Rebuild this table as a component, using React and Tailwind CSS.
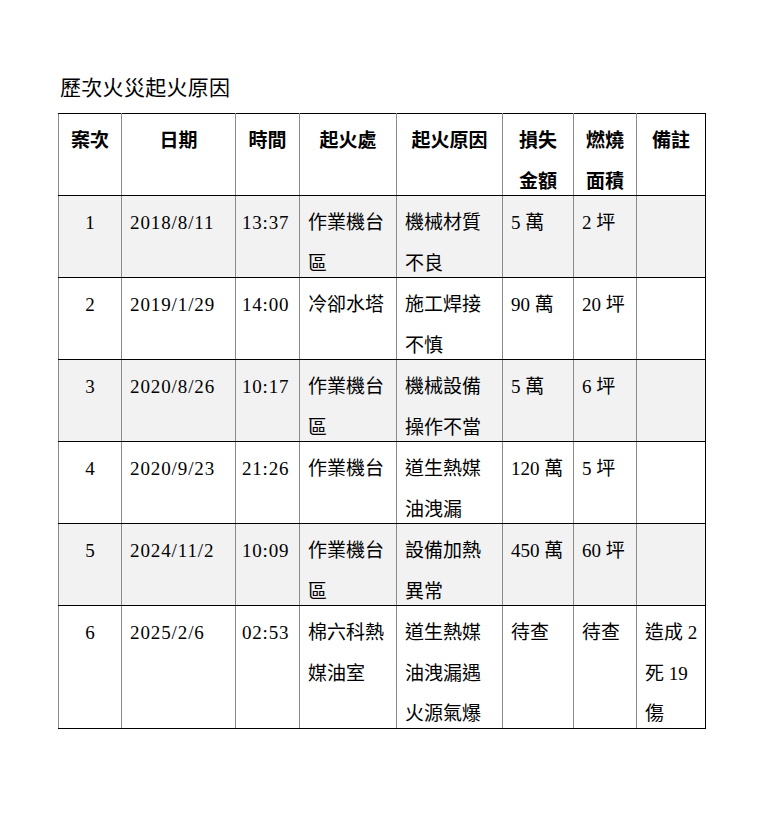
import React from "react";

const rows = [
    { no: "1", date: "2018/8/11", time: "13:37", place: "作業機台區", cause: "機械材質不良", loss: "5 萬", area: "2 坪", note: "", shade: true },
    { no: "2", date: "2019/1/29", time: "14:00", place: "冷卻水塔", cause: "施工焊接不慎", loss: "90 萬", area: "20 坪", note: "", shade: false },
    { no: "3", date: "2020/8/26", time: "10:17", place: "作業機台區", cause: "機械設備操作不當", loss: "5 萬", area: "6 坪", note: "", shade: true },
    { no: "4", date: "2020/9/23", time: "21:26", place: "作業機台", cause: "道生熱媒油洩漏", loss: "120 萬", area: "5 坪", note: "", shade: false },
    { no: "5", date: "2024/11/2", time: "10:09", place: "作業機台區", cause: "設備加熱異常", loss: "450 萬", area: "60 坪", note: "", shade: true },
    { no: "6", date: "2025/2/6", time: "02:53", place: "棉六科熱媒油室", cause: "道生熱媒油洩漏遇火源氣爆", loss: "待查", area: "待查", note: "造成 2 死 19 傷", shade: false },
];

const cell = "align-top p-0 border-y border-y-black border-x border-x-[#8a8a8a]";
const inner = "pt-[7px] -mb-[7px] leading-[40.5px] min-h-[81px]";

const App = () => {
    return (
        <div className="w-[758px] min-h-[817px] bg-white text-black font-['Liberation_Serif','Noto_Sans_CJK_TC',serif] pl-[58px] pt-[76px]">
            <h1 className="text-[21px] leading-[24px] pl-[2px] tracking-[0.3px]">歷次火災起火原因</h1>
            <table className="mt-[13px] w-[647px] table-fixed border-collapse text-[19px]">
                <colgroup>
                    <col className="w-[63px]" />
                    <col className="w-[114px]" />
                    <col className="w-[64px]" />
                    <col className="w-[97px]" />
                    <col className="w-[106px]" />
                    <col className="w-[71px]" />
                    <col className="w-[63px]" />
                    <col className="w-[69px]" />
                </colgroup>
                <thead>
                    <tr className="font-bold text-center">
                        <th className={cell}><div className={inner}>案次</div></th>
                        <th className={cell}><div className={inner}>日期</div></th>
                        <th className={cell}><div className={inner}>時間</div></th>
                        <th className={cell}><div className={inner}>起火處</div></th>
                        <th className={cell}><div className={inner}>起火原因</div></th>
                        <th className={cell}><div className={inner}>損失<br />金額</div></th>
                        <th className={cell}><div className={inner}>燃燒<br />面積</div></th>
                        <th className={`${cell} border-r-black`}><div className={inner}>備註</div></th>
                    </tr>
                </thead>
                <tbody>
                    {rows.map((r) => (
                        <tr key={r.no} className={r.shade ? "bg-[#f2f2f2]" : "bg-white"}>
                            <td className={cell}><div className={`${inner} text-center`}>{r.no}</div></td>
                            <td className={cell}><div className={`${inner} pl-[8px] tracking-[0.9px]`}>{r.date}</div></td>
                            <td className={cell}><div className={`${inner} pl-[6px] tracking-[0.8px]`}>{r.time}</div></td>
                            <td className={cell}><div className={`${inner} px-[8px]`}>{r.place}</div></td>
                            <td className={cell}><div className={`${inner} px-[8px]`}>{r.cause}</div></td>
                            <td className={cell}><div className={`${inner} px-[8px]`}>{r.loss}</div></td>
                            <td className={cell}><div className={`${inner} px-[8px]`}>{r.area}</div></td>
                            <td className={`${cell} border-r-black`}><div className={`${inner} pl-[8px] pr-[4px]`}>{r.note}</div></td>
                        </tr>
                    ))}
                </tbody>
            </table>
        </div>
    );
};

export default App;
